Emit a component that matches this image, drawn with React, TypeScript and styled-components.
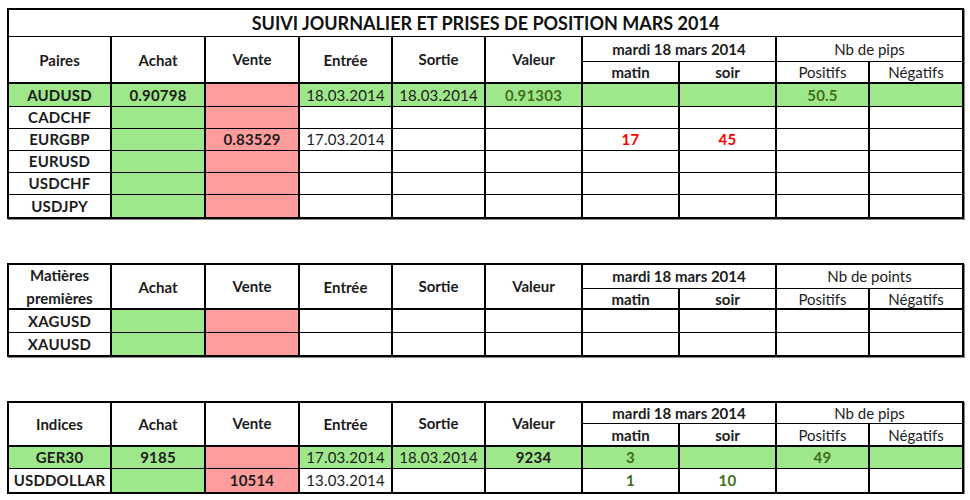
import React from 'react';
import styled, { createGlobalStyle } from 'styled-components';

type Fill = 'green' | 'red' | undefined;
type Tone = 'dark' | 'green' | 'red';

interface CellData {
  text?: string;
  fill?: Fill;
  tone?: Tone;
  bold?: boolean;
}

const GlobalStyle = createGlobalStyle`
  body {
    margin: 0;
    background: #fff;
    font-family: Lato, "Open Sans", sans-serif;
    color: #1c1c1c;
  }
`;

const Page = styled.div`
  display: flex;
  flex-direction: column;
  gap: 44px;
  padding: 8px 0 0 7px;
`;

// the sheet: black background + gaps = cell borders
const Sheet = styled.div<{ $rows: string }>`
  display: grid;
  width: 953px;
  grid-template-columns: 101px 92px 92px 91px 91px 95px 95px 95px 91px 92px;
  grid-template-rows: ${(p) => p.$rows};
  column-gap: 2px;
  row-gap: 1px;
  background: #000;
  border: 2px solid #000;
  border-left-width: 2.5px;
  box-shadow: 1px 1px 0 #8a8a8a;
`;

const fills = { green: '#9ee88b', red: '#ff9c9c' };
const tones = { dark: '#1c1c1c', green: '#3f6e1c', red: '#ff0000' };

const Cell = styled.div<{ $fill?: Fill; $tone?: Tone; $bold?: boolean }>`
  display: flex;
  align-items: center;
  justify-content: center;
  background: ${(p) => (p.$fill ? fills[p.$fill] : '#fff')};
  color: ${(p) => tones[p.$tone || 'dark']};
  font-size: 15px;
  font-weight: ${(p) => (p.$bold ? 700 : 400)};
  letter-spacing: 0.2px;
  line-height: 1;
  white-space: nowrap;
`;

const Title = styled.div`
  grid-column: 1 / -1;
  display: flex;
  align-items: center;
  justify-content: center;
  background: #fff;
  font-size: 18px;
  font-weight: 700;
  color: #111;
`;

const Head = styled.div<{ $rowSpan?: number; $colSpan?: number; $bold?: boolean; $shift?: number; $edge?: boolean }>`
  grid-row: span ${(p) => p.$rowSpan || 1};
  grid-column: span ${(p) => p.$colSpan || 1};
  display: flex;
  align-items: center;
  justify-content: center;
  text-align: center;
  background: #fff;
  box-shadow: ${(p) => (p.$edge ? 'inset 0 -1px 0 #000' : 'none')};
  font-size: 15px;
  font-weight: ${(p) => (p.$bold === false ? 400 : 700)};
  line-height: 23px;
  padding-bottom: ${(p) => p.$shift || 0}px;
  color: #1c1c1c;
`;

const g: CellData = { fill: 'green' };
const r: CellData = { fill: 'red' };
const e: CellData = {};
const label = (text: string, fill?: Fill): CellData => ({ text, fill, bold: true });

const plainRow = (name: string): CellData[] => [label(name), g, r, e, e, e, e, e, e, e];

const forexRows: CellData[][] = [
  [
    label('AUDUSD', 'green'),
    { text: '0.90798', fill: 'green', bold: true },
    r,
    { text: '18.03.2014', fill: 'green' },
    { text: '18.03.2014', fill: 'green' },
    { text: '0.91303', fill: 'green', bold: true, tone: 'green' },
    g,
    g,
    { text: '50.5', fill: 'green', bold: true, tone: 'green' },
    g,
  ],
  plainRow('CADCHF'),
  [
    label('EURGBP'),
    g,
    { text: '0.83529', fill: 'red', bold: true },
    { text: '17.03.2014' },
    e,
    e,
    { text: '17', bold: true, tone: 'red' },
    { text: '45', bold: true, tone: 'red' },
    e,
    e,
  ],
  plainRow('EURUSD'),
  plainRow('USDCHF'),
  plainRow('USDJPY'),
];

const commodityRows: CellData[][] = [plainRow('XAGUSD'), plainRow('XAUUSD')];

const indexRows: CellData[][] = [
  [
    label('GER30', 'green'),
    { text: '9185', fill: 'green', bold: true },
    r,
    { text: '17.03.2014', fill: 'green' },
    { text: '18.03.2014', fill: 'green' },
    { text: '9234', fill: 'green', bold: true },
    { text: '3', fill: 'green', bold: true, tone: 'green' },
    g,
    { text: '49', fill: 'green', bold: true, tone: 'green' },
    g,
  ],
  [
    label('USDDOLLAR'),
    g,
    { text: '10514', fill: 'red', bold: true },
    { text: '13.03.2014' },
    e,
    e,
    { text: '1', bold: true, tone: 'green' },
    { text: '10', bold: true, tone: 'green' },
    e,
    e,
  ],
];

const HeaderRows: React.FC<{ first: React.ReactNode; unit: string }> = ({ first, unit }) => (
  <>
    <Head $rowSpan={2} $edge>{first}</Head>
    <Head $rowSpan={2} $edge>Achat</Head>
    <Head $rowSpan={2} $edge $shift={2}>Vente</Head>
    <Head $rowSpan={2} $edge>Entrée</Head>
    <Head $rowSpan={2} $edge $shift={2}>Sortie</Head>
    <Head $rowSpan={2} $edge $shift={2}>Valeur</Head>
    <Head $colSpan={2}>mardi 18 mars 2014</Head>
    <Head $colSpan={2} $bold={false}>{unit}</Head>
    <Head $edge>matin</Head>
    <Head $edge>soir</Head>
    <Head $edge $bold={false}>Positifs</Head>
    <Head $edge $bold={false}>Négatifs</Head>
  </>
);

const Rows: React.FC<{ rows: CellData[][] }> = ({ rows }) => (
  <>
    {rows.map((row, ri) =>
      row.map((c, ci) => (
        <Cell key={`${ri}-${ci}`} $fill={c.fill} $tone={c.tone} $bold={c.bold}>
          {c.text}
        </Cell>
      ))
    )}
  </>
);

const App: React.FC = () => (
  <>
    <GlobalStyle />
    <Page>
      <Sheet $rows="26px 24px 21px 22px repeat(4, 21px) 22px">
        <Title>SUIVI JOURNALIER ET PRISES DE POSITION MARS 2014</Title>
        <HeaderRows first="Paires" unit="Nb de pips" />
        <Rows rows={forexRows} />
      </Sheet>
      <Sheet $rows="23px 20px 22px 22px">
        <HeaderRows
          first={
            <span>
              Matières
              <br />
              premières
            </span>
          }
          unit="Nb de points"
        />
        <Rows rows={commodityRows} />
      </Sheet>
      <Sheet $rows="20px 22px 21px 23px">
        <HeaderRows first="Indices" unit="Nb de pips" />
        <Rows rows={indexRows} />
      </Sheet>
    </Page>
  </>
);

export default App;
